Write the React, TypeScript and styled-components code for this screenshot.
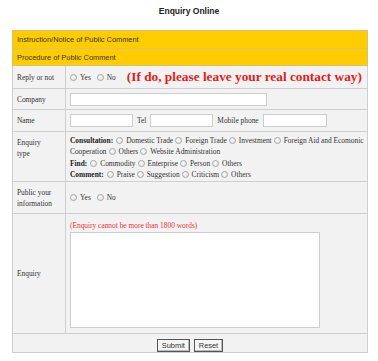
import React from 'react'
import styled, { createGlobalStyle } from 'styled-components'

const GlobalStyle = createGlobalStyle`
  body {
    margin: 0;
    background: #fff;
    font-family: 'Liberation Serif', 'Times New Roman', serif;
  }
`

const Page = styled.div`
  width: 378px;
`

const Title = styled.h1`
  margin: 0;
  height: 30px;
  padding-top: 6px;
  box-sizing: border-box;
  font-family: 'Liberation Sans', Arial, sans-serif;
  font-size: 8.5px;
  line-height: 10px;
  font-weight: bold;
  text-align: center;
  color: #222;
`

const FormTable = styled.table`
  margin: 0 12px;
  width: 356px;
  border-collapse: collapse;
  border: 1px solid #bcbcbc;
  table-layout: fixed;
`

const Col = styled.col<{ $w?: number }>`
  width: ${(p) => (p.$w ? `${p.$w}px` : 'auto')};
`

const BarCell = styled.td`
  background: #ffcc00;
  border: 1px solid #d6c27a;
  padding: 0 4px;
  font-family: 'Liberation Sans', Arial, sans-serif;
  font-size: 7.4px;
  color: #333;
`

const Row = styled.tr<{ $h: number }>`
  height: ${(p) => p.$h}px;
`

const Label = styled.td<{ $top?: boolean }>`
  background: #f2f2f2;
  border: 1px solid #cfcfcf;
  padding: ${(p) => (p.$top ? '5px 4px 0' : '0 4px')};
  vertical-align: ${(p) => (p.$top ? 'top' : 'middle')};
  font-size: 7.4px;
  line-height: 11px;
  color: #333;
  white-space: nowrap;
`

const Value = styled.td<{ $pad?: string }>`
  background: #f2f2f2;
  border: 1px solid #cfcfcf;
  padding: ${(p) => p.$pad || '0 4px'};
  font-size: 7.4px;
  color: #333;
`

const Inline = styled.div`
  display: flex;
  align-items: center;
  gap: 4px;
  white-space: nowrap;
`

const Option = styled.label<{ $tight?: boolean }>`
  display: inline-flex;
  align-items: center;
  gap: 3px;
  margin-right: ${(p) => (p.$tight ? 0 : 2)}px;
  font-size: 7.4px;
  color: #333;
`

const Radio = styled.input.attrs({ type: 'radio' })`
  appearance: none;
  margin: 0;
  width: 7px;
  height: 7px;
  border: 1px solid #a9a9a9;
  border-radius: 50%;
  background: radial-gradient(circle at 40% 40%, #fdfdfd, #d9d9d9);
  box-sizing: border-box;
`

const Notice = styled.span`
  margin-left: 5px;
  font-size: 13.3px;
  font-weight: bold;
  color: #e31b1b;
`

const TextBox = styled.input<{ $w: number }>`
  width: ${(p) => p.$w}px;
  height: 13px;
  margin: 0;
  padding: 0;
  box-sizing: border-box;
  border: 1px solid #cdcdcd;
  background: #fff;
`

const TypeList = styled.div`
  font-size: 7.4px;
  line-height: 11.5px;
  white-space: nowrap;
  padding-top: 2px;
`

const TypeLine = styled.div`
  display: flex;
  align-items: center;
  gap: 2px;
`

const Head = styled.b`
  color: #222;
  margin-right: 1px;
`

const Hint = styled.div`
  font-size: 7.4px;
  color: #e33;
  line-height: 11px;
  margin-bottom: 1px;
`

const Area = styled.textarea`
  display: block;
  width: 250px;
  height: 96px;
  margin: 0;
  padding: 0;
  box-sizing: border-box;
  border: 1px solid #cdcdcd;
  background: #fff;
  resize: none;
  overflow-y: scroll;

  &::-webkit-scrollbar {
    width: 8px;
    background: #f0f0f0;
  }
  &::-webkit-scrollbar-button:single-button {
    display: block;
    height: 10px;
    background: #f0f0f0 no-repeat center;
  }
  &::-webkit-scrollbar-button:single-button:vertical:decrement {
    background-image: url("data:image/svg+xml;utf8,<svg xmlns='http://www.w3.org/2000/svg' width='4' height='3'><path d='M0 3L2 0L4 3Z' fill='%23999'/></svg>");
  }
  &::-webkit-scrollbar-button:single-button:vertical:increment {
    background-image: url("data:image/svg+xml;utf8,<svg xmlns='http://www.w3.org/2000/svg' width='4' height='3'><path d='M0 0L2 3L4 0Z' fill='%23999'/></svg>");
  }
`

const Actions = styled.td`
  background: #f2f2f2;
  border: 1px solid #cfcfcf;
  text-align: center;
  padding: 0;
`

const Button = styled.button`
  font-family: 'Liberation Sans', Arial, sans-serif;
  font-size: 7.4px;
  height: 13px;
  padding: 0 4px;
  margin: 0 2px;
  line-height: 11px;
  color: #333;
  background: #f5f5f5;
  border: 1px solid #555;
  box-shadow: inset -1px -1px 0 #bbb;
  border-radius: 0;
`

const choice = (text: string, name: string, tight = false) => (
  <Option key={text} $tight={tight}>
    <Radio name={name} />
    {text}
  </Option>
)

export default function App() {
  return (
    <Page>
      <GlobalStyle />
      <Title>Enquiry Online</Title>
      <FormTable>
        <colgroup>
          <Col $w={53} />
          <Col />
        </colgroup>
        <tbody>
          <Row $h={18}>
            <BarCell colSpan={2}>Instruction/Notice of Public Comment</BarCell>
          </Row>
          <Row $h={17}>
            <BarCell colSpan={2}>Procedure of Public Comment</BarCell>
          </Row>
          <Row $h={23}>
            <Label>Reply or not</Label>
            <Value>
              <Inline>
                {choice('Yes', 'reply')}
                {choice('No', 'reply')}
                <Notice>(If do, please leave your real contact way)</Notice>
              </Inline>
            </Value>
          </Row>
          <Row $h={21}>
            <Label>Company</Label>
            <Value>
              <TextBox $w={197} />
            </Value>
          </Row>
          <Row $h={22}>
            <Label>Name</Label>
            <Value>
              <Inline>
                <TextBox $w={63} />
                Tel
                <TextBox $w={63} />
                Mobile phone
                <TextBox $w={64} />
              </Inline>
            </Value>
          </Row>
          <Row $h={50}>
            <Label $top>
              Enquiry
              <br />
              type
            </Label>
            <Value $pad="0 4px">
              <TypeList>
                <TypeLine>
                  <Head>Consultation:</Head>
                  {['Domestic Trade', 'Foreign Trade', 'Investment', 'Foreign Aid and Ecomonic'].map((t) =>
                    choice(t, 'consult', true)
                  )}
                </TypeLine>
                <TypeLine>
                  Cooperation {choice('Others', 'consult', true)}
                  {choice('Website Administration', 'consult', true)}
                </TypeLine>
                <TypeLine>
                  <Head>Find:</Head>
                  {['Commodity', 'Enterprise', 'Person', 'Others'].map((t) => choice(t, 'find', true))}
                </TypeLine>
                <TypeLine>
                  <Head>Comment:</Head>
                  {['Praise', 'Suggestion', 'Criticism', 'Others'].map((t) => choice(t, 'comment', true))}
                </TypeLine>
              </TypeList>
            </Value>
          </Row>
          <Row $h={32}>
            <Label>
              Public your
              <br />
              information
            </Label>
            <Value>
              <Inline>
                {choice('Yes', 'public')}
                {choice('No', 'public')}
              </Inline>
            </Value>
          </Row>
          <Row $h={120}>
            <Label>Enquiry</Label>
            <Value $pad="4px 4px 3px">
              <Hint>(Enquiry cannot be more than 1800 words)</Hint>
              <Area />
            </Value>
          </Row>
          <Row $h={19}>
            <Actions colSpan={2}>
              <Button>Submit</Button>
              <Button>Reset</Button>
            </Actions>
          </Row>
        </tbody>
      </FormTable>
    </Page>
  )
}
